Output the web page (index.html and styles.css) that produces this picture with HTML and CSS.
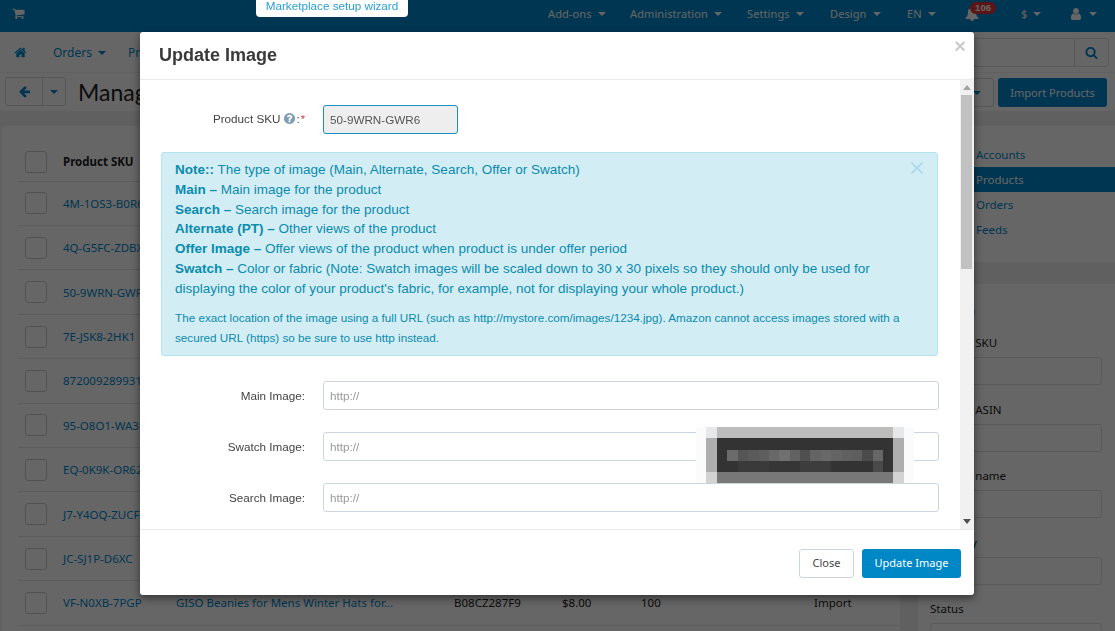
FILE: index.html
```html
<!DOCTYPE html>
<html lang="en">
<head>
<meta charset="utf-8">
<title>Update Image</title>
<link rel="stylesheet" href="styles.css">
</head>
<body>
<svg class="sprite" aria-hidden="true">
  <symbol id="i-cart" viewBox="0 0 1792 1792"><path d="M704 1536q0 52-38 90t-90 38-90-38-38-90 38-90 90-38 90 38 38 90zm896 0q0 52-38 90t-90 38-90-38-38-90 38-90 90-38 90 38 38 90zm128-1088v512q0 24-16.5 42.5t-40.5 21.5l-1044 122q13 60 13 70 0 16-24 64h920q26 0 45 19t19 45-19 45-45 19h-1024q-26 0-45-19t-19-45q0-11 8-31.5t16-36 21.5-40 15.5-29.5l-177-823h-204q-26 0-45-19t-19-45 19-45 45-19h256q16 0 28.5 6.5t19.5 15.5 13 24.5 8 26 5.5 29.5 4.5 26h1201q26 0 45 19t19 45z"/></symbol>
  <symbol id="i-home" viewBox="0 0 1792 1792"><path d="M1472 992v480q0 26-19 45t-45 19h-384v-384h-256v384h-384q-26 0-45-19t-19-45v-480q0-1 .5-3t.5-3l575-474 575 474q1 2 1 6zm223-69l-62 74q-8 9-21 11h-3q-13 0-21-7l-692-577-692 577q-12 8-24 7-13-2-21-11l-62-74q-8-10-7-23.5t11-21.5l719-599q32-26 76-26t76 26l244 204v-195q0-14 9-23t23-9h192q14 0 23 9t9 23v408l219 182q10 8 11 21.5t-7 23.5z"/></symbol>
  <symbol id="i-bell" viewBox="0 0 1792 1792"><path d="M912 1696q0-16-16-16-59 0-101.5-42.5t-42.5-101.5q0-16-16-16t-16 16q0 73 51.5 124.5t124.5 51.5q16 0 16-16zm816-288q0 52-38 90t-90 38h-448q0 106-75 181t-181 75-181-75-75-181h-448q-52 0-90-38t-38-90q50-42 91-88t85-119.5 74.5-158.5 50-206 19.5-260q0-152 117-282.5t307-158.5q-8-19-8-39 0-40 28-68t68-28 68 28 28 68q0 20-8 39 190 28 307 158.5t117 282.5q0 139 19.5 260t50 206 74.5 158.5 85 119.5 91 88z"/></symbol>
  <symbol id="i-user" viewBox="0 0 1792 1792"><path d="M1536 1399q0 109-62.5 187t-150.5 78h-854q-88 0-150.5-78t-62.5-187q0-85 8.5-160.5t31.5-152 58.5-131 94-89 134.5-34.5q131 128 313 128t313-128q76 0 134.5 34.5t94 89 58.5 131 31.5 152 8.5 160.5zm-256-887q0 159-112.5 271.5t-271.5 112.5-271.5-112.5-112.5-271.5 112.5-271.5 271.5-112.5 271.5 112.5 112.5 271.5z"/></symbol>
  <symbol id="i-search" viewBox="0 0 1792 1792"><path d="M1216 832q0-185-131.5-316.5t-316.5-131.5-316.5 131.5-131.5 316.5 131.5 316.5 316.5 131.5 316.5-131.5 131.5-316.5zm512 832q0 52-38 90t-90 38q-54 0-90-38l-343-342q-179 124-399 124-143 0-273.5-55.5t-225-150-150-225-55.5-273.5 55.5-273.5 150-225 225-150 273.5-55.5 273.5 55.5 225 150 150 225 55.5 273.5q0 220-124 399l343 343q37 37 37 90z"/></symbol>
  <symbol id="i-back" viewBox="0 0 1792 1792"><path d="M1664 896v128q0 53-32.5 90.5t-84.5 37.5h-704l293 294q38 36 38 90t-38 90l-75 76q-37 37-90 37-52 0-91-37l-651-652q-37-37-37-90 0-52 37-91l651-650q38-38 91-38 52 0 90 38l75 74q38 38 38 91t-38 91l-293 293h704q52 0 84.5 37.5t32.5 90.5z"/></symbol>
  <symbol id="i-help" viewBox="0 0 1792 1792"><path d="M1024 1376v-192q0-14-9-23t-23-9h-192q-14 0-23 9t-9 23v192q0 14 9 23t23 9h192q14 0 23-9t9-23zm256-672q0-88-55.5-163t-138.5-116-170-41q-243 0-371 213-15 24 8 42l132 100q7 6 19 6 16 0 25-12 53-68 86-92 34-24 86-24 48 0 85.5 26t37.5 59q0 38-20 61t-68 45q-63 28-115.5 86.5t-52.5 125.5v36q0 14 9 23t23 9h192q14 0 23-9t9-23q0-19 21.5-49.5t54.5-49.5q32-18 49-28.5t46-35 44.5-48 28-60.5 12.5-81zm384 192q0 209-103 385.5t-279.5 279.5-385.5 103-385.5-103-279.5-279.5-103-385.5 103-385.5 279.5-279.5 385.5-103 385.5 103 279.5 279.5 103 385.5z"/></symbol>
</svg>

<header class="topbar">
  <a class="cart"><svg class="ico ico-cart"><use href="#i-cart"/></svg></a>
  <nav class="topmenu">
    <a class="topitem">Add-ons<i class="caret"></i></a>
    <a class="topitem">Administration<i class="caret"></i></a>
    <a class="topitem">Settings<i class="caret"></i></a>
    <a class="topitem">Design<i class="caret"></i></a>
    <a class="topitem">EN<i class="caret"></i></a>
    <a class="topitem bell"><svg class="ico ico-bell"><use href="#i-bell"/></svg><span class="badge">106</span></a>
    <a class="topitem">$<i class="caret"></i></a>
    <a class="topitem"><svg class="ico ico-user"><use href="#i-user"/></svg><i class="caret"></i></a>
  </nav>
</header>

<div class="subnav">
  <a class="home"><svg class="ico ico-home"><use href="#i-home"/></svg></a>
  <a class="subitem">Orders<i class="caret"></i></a>
  <a class="subitem">Products<i class="caret"></i></a>
  <div class="searchbox">
    <span class="searchfield"></span>
    <span class="searchbtn"><svg class="ico ico-search"><use href="#i-search"/></svg></span>
  </div>
</div>

<div class="pagebar">
  <div class="btngroup">
    <span class="gbtn gbtn-back"><svg class="ico ico-back"><use href="#i-back"/></svg></span>
    <span class="gbtn gbtn-drop"><i class="caret"></i></span>
  </div>
  <h1 class="pagetitle">Manage Products</h1>
  <div class="pageactions">
    <span class="toolbtn"><i class="caret"></i></span>
    <span class="importbtn">Import Products</span>
  </div>
</div>

<main class="content">
  <section class="listing">
    <div class="row row-head">
      <span class="check check-head"></span><span class="sku">Product SKU</span>
    </div>
    <div class="row"><span class="check"></span><a class="sku">4M-1OS3-B0R6</a></div>
    <div class="row"><span class="check"></span><a class="sku">4Q-G5FC-ZDBX</a></div>
    <div class="row"><span class="check"></span><a class="sku">50-9WRN-GWR6</a></div>
    <div class="row"><span class="check"></span><a class="sku">7E-JSK8-2HK1</a></div>
    <div class="row"><span class="check"></span><a class="sku">8720092899312</a></div>
    <div class="row"><span class="check"></span><a class="sku">95-O8O1-WA3L</a></div>
    <div class="row"><span class="check"></span><a class="sku">EQ-0K9K-OR62</a></div>
    <div class="row"><span class="check"></span><a class="sku">J7-Y4OQ-ZUCF</a></div>
    <div class="row"><span class="check"></span><a class="sku">JC-SJ1P-D6XC</a></div>
    <div class="row">
      <span class="check"></span><a class="sku">VF-N0XB-7PGP</a>
      <a class="cell">GISO Beanies for Mens Winter Hats for...</a>
      <span class="cell">B08CZ287F9</span>
      <span class="cell">$8.00</span>
      <span class="cell">100</span>
      <span class="cell">Import</span>
    </div>
  </section>

  <aside class="side">
    <ul class="sidemenu">
      <li class="sideitem">Accounts</li>
      <li class="sideitem sideitem-active">Products</li>
      <li class="sideitem">Orders</li>
      <li class="sideitem">Feeds</li>
    </ul>
    <div class="sidegap"></div>
    <div class="sideform">
      <div class="sidehead">Action</div>
      <div class="sidefield"><span>Product SKU</span><span class="sideinput"></span></div>
      <div class="sidefield"><span>Product ASIN</span><span class="sideinput"></span></div>
      <div class="sidefield"><span>Product name</span><span class="sideinput"></span></div>
      <div class="sidefield"><span>Quantity</span><span class="sideinput"></span></div>
      <div class="sidefield"><span>Status</span><span class="sideinput"></span></div>
    </div>
  </aside>
</main>

<div class="overlay"></div>
<a class="wizard">Marketplace setup wizard</a>

<div class="modal">
  <div class="modal-head">
    <h2 class="modal-title">Update Image</h2>
    <span class="modal-x">&times;</span>
  </div>
  <div class="modal-body">
    <div class="modal-inner">
      <div class="frow frow-sku">
        <label class="flabel flabel-sku">Product SKU <svg class="ico ico-help"><use href="#i-help"/></svg>:<span class="req">*</span></label>
        <input class="finput finput-sku" value="50-9WRN-GWR6" readonly>
      </div>
      <div class="alert">
        <svg class="alert-x" viewBox="0 0 12 12"><path d="M.5.5l11 11M11.5.5l-11 11"/></svg>
        <p class="alert-line"><b>Note::</b> The type of image (Main, Alternate, Search, Offer or Swatch)</p>
        <p class="alert-line"><b>Main &ndash;</b> Main image for the product</p>
        <p class="alert-line"><b>Search &ndash;</b> Search image for the product</p>
        <p class="alert-line"><b>Alternate (PT) &ndash;</b> Other views of the product</p>
        <p class="alert-line"><b>Offer Image &ndash;</b> Offer views of the product when product is under offer period</p>
        <p class="alert-line"><b>Swatch &ndash;</b> Color or fabric (Note: Swatch images will be scaled down to 30 x 30 pixels so they should only be used for displaying the color of your product's fabric, for example, not for displaying your whole product.)</p>
        <p class="alert-small">The exact location of the image using a full URL (such as http://mystore.com/images/1234.jpg). Amazon cannot access images stored with a secured URL (https) so be sure to use http instead.</p>
      </div>
      <div class="frow"><label class="flabel">Main Image:</label><input class="finput" placeholder="http://"></div>
      <div class="frow"><label class="flabel">Swatch Image:</label><input class="finput" placeholder="http://"></div>
      <div class="frow"><label class="flabel">Search Image:</label><input class="finput" placeholder="http://"></div>
    </div>
    <div class="rail">
      <svg class="rail-arrow rail-up" viewBox="0 0 8 5"><path d="M4 0l4 5H0z"/></svg>
      <span class="rail-thumb"></span>
      <svg class="rail-arrow rail-down" viewBox="0 0 8 5"><path d="M0 0h8L4 5z"/></svg>
    </div>
  </div>
  <div class="modal-foot">
    <button class="btn btn-close">Close</button>
    <button class="btn btn-primary">Update Image</button>
  </div>
  <svg class="redact" viewBox="0 0 218 56" shape-rendering="crispEdges" aria-hidden="true">
    <rect width="218" height="56" fill="#fbfbfb"/>
    <rect x="10" width="198" height="45" fill="#f7f8f8"/>
    <rect x="10" width="11" height="11" fill="#e6e8ea"/>
    <rect x="197" width="11" height="11" fill="#e6e8ea"/>
    <rect x="21" width="176" height="11" fill="#bcbebc"/>
    <rect x="10" y="11" width="11" height="34" fill="#aeaeae"/>
    <rect x="197" y="11" width="11" height="34" fill="#aeaeae"/>
    <rect x="21" y="11" width="176" height="34" fill="#333333"/>
    <rect x="10" y="45" width="11" height="11" fill="#d3d3d3"/>
    <rect x="197" y="45" width="11" height="11" fill="#d3d3d3"/>
    <rect x="21" y="45" width="176" height="11" fill="#787878"/>
    <rect x="31" y="23" width="11" height="11" fill="#6b6b6b"/>
    <rect x="42" y="23" width="10" height="11" fill="#565656"/>
    <rect x="52" y="23" width="11" height="11" fill="#5b5b5b"/>
    <rect x="63" y="23" width="10" height="11" fill="#5e5e5e"/>
    <rect x="73" y="23" width="10" height="11" fill="#686868"/>
    <rect x="83" y="23" width="11" height="11" fill="#707070"/>
    <rect x="94" y="23" width="10" height="11" fill="#626262"/>
    <rect x="104" y="23" width="10" height="11" fill="#4f4f4f"/>
    <rect x="114" y="23" width="11" height="11" fill="#646464"/>
    <rect x="125" y="23" width="10" height="11" fill="#686868"/>
    <rect x="135" y="23" width="11" height="11" fill="#646464"/>
    <rect x="146" y="23" width="10" height="11" fill="#606060"/>
    <rect x="156" y="23" width="10" height="11" fill="#5e5e5e"/>
    <rect x="166" y="23" width="11" height="11" fill="#4b4b4b"/>
    <rect x="177" y="23" width="10" height="11" fill="#666666"/>
    <rect x="42" y="34" width="31" height="11" fill="#3a3a3a"/>
    <rect x="73" y="34" width="41" height="11" fill="#363636"/>
    <rect x="104" y="34" width="31" height="11" fill="#3d3d3d"/>
    <rect x="177" y="34" width="10" height="11" fill="#494949"/>
  </svg>
</div>
</body>
</html>
```

FILE: styles.css
```css
* { box-sizing: border-box; }
html, body { margin: 0; height: 631px; overflow: hidden; }
body { font-family: "Noto Sans", "Open Sans", sans-serif; font-size: 12px; color: #222; background: #f0f0f0; }
.sprite { display: none; }
.ico { display: block; fill: currentColor; }
.caret { display: inline-block; width: 0; height: 0; margin-left: 6px; vertical-align: middle; border-top: 4px solid currentColor; border-left: 4px solid transparent; border-right: 4px solid transparent; }

.topbar { display: flex; height: 32px; background: #0088cc; color: #fff; }
.cart { padding: 7px 0 0 12px; width: 548px; }
.ico-cart { width: 13px; height: 13px; }
.topmenu { display: grid; grid-template-columns: 82px 117px 83px 77px 58px 56px 48px 46px; align-items: center; height: 27px; font-size: 11px; }
.topitem { display: flex; align-items: center; white-space: nowrap; letter-spacing: .1px; }
.bell { position: relative; }
.ico-bell { width: 14px; height: 14px; }
.ico-user { width: 14px; height: 14px; }
.badge { position: absolute; left: 5px; top: -5px; padding: 0 5px; border-radius: 7px; background: #e53535; font: bold 9.5px/12px "Liberation Sans", sans-serif; }

.subnav { display: flex; height: 41px; background: #fff; color: #0088cc; border-bottom: 1px solid #f2f2f2; align-items: center; padding-left: 14px; }
.home { width: 39px; }
.ico-home { width: 13px; height: 13px; }
.subitem { width: 75px; white-space: nowrap; font-size: 12px; }
.searchbox { display: flex; margin-left: auto; margin-right: 6px; height: 29px; align-self: flex-start; margin-top: 6px; }
.searchfield { width: 180px; background: #fff; border: 1px solid #ddd; border-right: 0; }
.searchbtn { width: 35px; border: 1px solid #ddd; border-radius: 0 3px 3px 0; display: flex; align-items: center; justify-content: center; }
.ico-search { width: 13px; height: 13px; }

.pagebar { display: flex; align-items: flex-start; height: 38px; background: #fff; padding: 4px 8px 0 5px; border-radius: 0 0 4px 4px; }
.btngroup { display: flex; height: 29px; border: 1px solid #d9d9d9; border-radius: 3px; color: #0088cc; }
.gbtn { display: flex; align-items: center; justify-content: center; }
.gbtn-back { width: 37px; border-right: 1px solid #d9d9d9; }
.gbtn-drop { width: 22px; }
.gbtn-drop .caret { margin: 0; }
.ico-back { width: 13px; height: 13px; }
.pagetitle { margin: -1px 0 0 12px; font: 400 23px/32px Lato, "Noto Sans", sans-serif; color: #222; white-space: nowrap; }
.pageactions { display: flex; gap: 4px; margin-left: auto; margin-top: 1px; height: 29px; }
.toolbtn { display: flex; align-items: center; width: 30px; padding-left: 8px; border: 1px solid #d9d9d9; border-radius: 3px; color: #0088cc; }
.toolbtn .caret { margin: 0; }
.importbtn { display: flex; align-items: center; justify-content: center; width: 109px; background: #0088cc; color: #fff; border-radius: 3px; font-size: 11px; }

.content { display: grid; grid-template-columns: 898px 197px; gap: 18px; margin: 15px 0 0 2px; height: 505px; overflow: hidden; }
.listing { background: #fff; padding: 19px 0 0 16px; border-radius: 4px 4px 0 0; height: 505px; }
.row { display: grid; grid-template-columns: 45px 113px 278px 108px 79px 173px 1fr; align-items: center; height: 44.4px; border-bottom: 1px solid #e6e6e6; color: #0088cc; font-size: 11.5px; }
.row-head { height: 36.7px; color: #222; font-weight: 700; align-items: start; }
.check { display: block; margin-left: 7px; width: 22px; height: 22px; background: #fff; border: 1px solid #ccc; border-radius: 3px; }
.check-head { margin-top: 6px; }
.row-head .sku { margin-top: 9px; }
.sku { white-space: nowrap; }
.cell { white-space: nowrap; color: #222; }
a.cell { color: #0088cc; }

.side { display: flex; flex-direction: column; height: 505px; min-height: 0; overflow: hidden; }
.sidemenu { flex: none; list-style: none; margin: 0; padding: 16px 0 20px; background: #fff; height: 136px; }
.sideitem { height: 25px; line-height: 25px; padding-left: 58px; color: #0088cc; font-size: 11.5px; }
.sideitem-active { background: #0088cc; color: #fff; }
.sidegap { flex: none; height: 22px; }
.sideform { flex: 1; min-height: 0; overflow: hidden; background: #fff; padding: 16px 13px 0 12px; font-size: 11.5px; }
.sidehead { font-weight: 700; font-size: 14px; line-height: 20px; height: 33px; white-space: nowrap; }
.sidefield { display: flex; flex-direction: column; height: 66.5px; padding-top: 1px; }
.sidefield > span:first-child { height: 16px; line-height: 16px; margin-top: 1px; }
.sideinput { display: block; height: 28px; margin-top: 6px; flex: none; border: 1px solid #dfdfdf; border-radius: 3px; }

.overlay { position: fixed; inset: 0; background: rgba(0, 0, 0, .6); }
.wizard { position: absolute; left: 256px; top: 0; width: 152px; height: 17px; background: #fff; border-radius: 0 0 4px 4px; color: #2a9fd8; font: 11.7px/11px "Liberation Sans", sans-serif; text-align: center; }

.modal { position: absolute; left: 140px; top: 32px; width: 834px; height: 563px; display: flex; flex-direction: column; background: #fff; border-radius: 3px; box-shadow: 0 3px 9px rgba(0, 0, 0, .5); font-family: "Liberation Sans", sans-serif; color: #444; }
.modal-head { display: flex; flex: none; justify-content: space-between; height: 48px; border-bottom: 1px solid #e9e9e9; padding: 12px 8px 0 19px; }
.modal-title { margin: 0; font: 700 18px/22px "Liberation Sans", sans-serif; color: #3a3a3a; }
.modal-x { margin-top: -8px; font: 700 20px/20px "Liberation Sans", sans-serif; color: #ccc; }
.modal-body { flex: 1; min-height: 0; display: flex; overflow: hidden; }
.modal-inner { flex: 1; min-width: 0; padding: 25px 21px 0; }
.rail { flex: none; display: flex; flex-direction: column; width: 14px; background: #f1f1f1; }
.rail-arrow { flex: none; width: 8px; height: 5px; margin: 5px 0 5px 3px; }
.rail-up { fill: #a3a3a3; }
.rail-down { fill: #505050; margin-top: auto; }
.rail-thumb { display: block; flex: none; width: 11px; height: 174px; margin-left: 1px; background: #c1c1c1; }
.frow { display: grid; grid-template-columns: 144px 616px; column-gap: 18px; align-items: center; height: 29px; margin-bottom: 22px; }
.frow-sku { margin-bottom: 18px; }
.flabel { text-align: right; font-size: 11.7px; white-space: nowrap; color: #444; }
.flabel-sku { display: flex; justify-content: flex-end; align-items: center; gap: 0; margin-top: -3px; }
.ico-help { width: 13px; height: 13px; margin: 0 0 0 3px; color: #7f9db5; }
.req { color: #e0323c; font-size: 11px; line-height: 11px; margin: 2px 0 0 1px; }
.finput { width: 100%; height: 29px; padding: 0 6px; border: 1px solid #ccd6e0; border-radius: 3px; background: #fff; font: 11.7px "Liberation Sans", sans-serif; color: #555; outline: 0; }
.finput::placeholder { color: #999; opacity: 1; }
.finput-sku { width: 135px; background: #eee; border-color: #1a8fc0; color: #555; }

.alert { position: relative; width: 777px; height: 204px; margin-bottom: 25px; padding: 7px 13px; background: #d3edf5; border: 1px solid #b7e3ee; border-radius: 3px; color: #0a8cad; }
.alert-line { margin: 0; font-size: 13.5px; line-height: 19.8px; }
.alert-small { margin: 9px 0 0; font-size: 11.7px; line-height: 20px; }
.alert-x { position: absolute; right: 14px; top: 9px; width: 12px; height: 12px; fill: none; stroke: #a7d8ee; stroke-width: 1.6; }

.modal-foot { flex: none; display: flex; justify-content: flex-end; gap: 8px; height: 66px; padding: 19px 13px 0 0; border-top: 1px solid #e9e9e9; }
.btn { height: 29px; padding: 0 0 2px; border-radius: 3px; font: 11px/1 "Noto Sans", "Open Sans", sans-serif; }
.btn-close { width: 55px; background: #fff; border: 1px solid #ccd6e0; color: #444; }
.btn-primary { width: 99px; background: #0088c6; border: 0; color: #fff; }

.redact { position: absolute; left: 556px; top: 395px; width: 218px; height: 56px; }
```
